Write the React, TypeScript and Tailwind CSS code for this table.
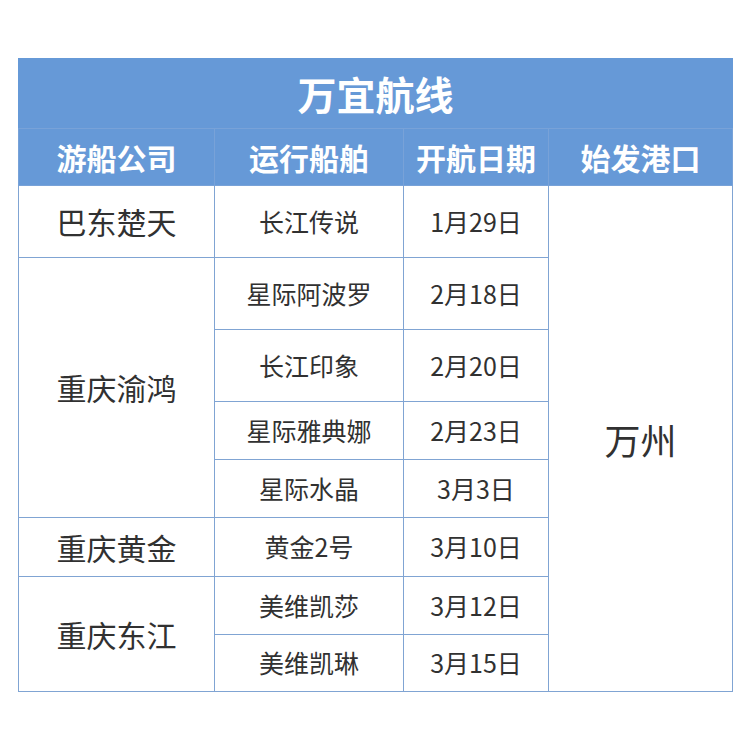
import React from "react";

const font = { fontFamily: '"Noto Sans CJK SC", "Noto Sans", sans-serif' };

type Row = { company?: string; span?: number; ship: string; date: string; h: string };

const rows: Row[] = [
  { company: "巴东楚天", span: 1, ship: "长江传说", date: "1月29日", h: "h-[72px]" },
  { company: "重庆渝鸿", span: 4, ship: "星际阿波罗", date: "2月18日", h: "h-[72px]" },
  { ship: "长江印象", date: "2月20日", h: "h-[72px]" },
  { ship: "星际雅典娜", date: "2月23日", h: "h-[58px]" },
  { ship: "星际水晶", date: "3月3日", h: "h-[58px]" },
  { company: "重庆黄金", span: 1, ship: "黄金2号", date: "3月10日", h: "h-[59px]" },
  { company: "重庆东江", span: 2, ship: "美维凯莎", date: "3月12日", h: "h-[58px]" },
  { ship: "美维凯琳", date: "3月15日", h: "h-[57px]" },
];

export default function App() {
  const cell = "border-[1.5px] border-[#80a4d3] text-center align-middle p-0";
  const head = "border-[1.5px] border-[#78a2d8] text-center align-middle p-0 text-white font-bold text-[30px]";
  return (
    <div className="w-[750px] h-[750px] bg-white pt-[58px] pl-[18px]" style={font}>
      <table className="border-collapse table-fixed w-[714px] text-[#313131]">
        <colgroup>
          <col className="w-[196px]" />
          <col className="w-[189px]" />
          <col className="w-[145px]" />
          <col className="w-[184px]" />
        </colgroup>
        <thead>
          <tr className="h-[70px] bg-[#6699d7]">
            <th colSpan={4} className="border-[1.5px] border-[#6699d7] border-b-[#78a2d8] text-white font-bold text-[39px] text-center align-middle p-0">
              万宜航线
            </th>
          </tr>
          <tr className="h-[57px] bg-[#6699d7]">
            <th className={head}>游船公司</th>
            <th className={head}>运行船舶</th>
            <th className={head}>开航日期</th>
            <th className={head}>始发港口</th>
          </tr>
        </thead>
        <tbody>
          {rows.map((r, i) => (
            <tr key={i} className={r.h}>
              {r.company && (
                <td rowSpan={r.span} className={cell + " text-[30px]"}>
                  {r.company}
                </td>
              )}
              <td className={cell + " text-[25px]"}>{r.ship}</td>
              <td className={cell + " text-[25px]"}>{r.date}</td>
              {i === 0 && (
                <td rowSpan={8} className={cell + " text-[36px]"}>
                  万州
                </td>
              )}
            </tr>
          ))}
        </tbody>
      </table>
    </div>
  );
}
